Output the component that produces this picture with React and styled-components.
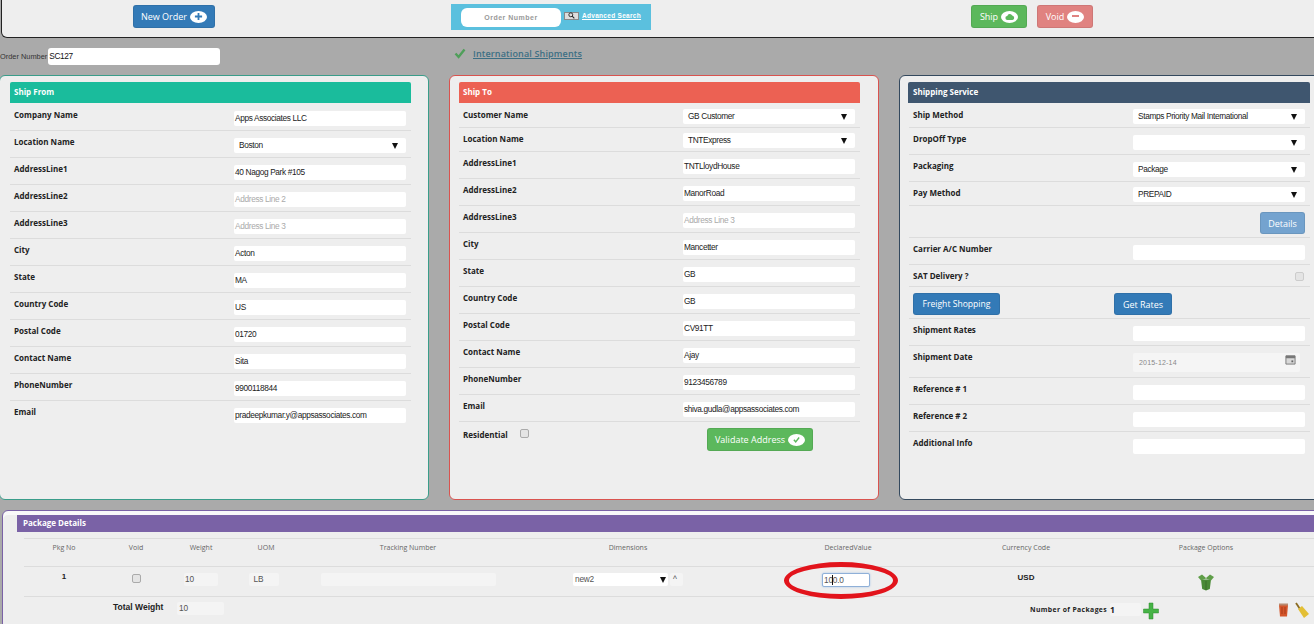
import React from 'react'
import styled, { createGlobalStyle } from 'styled-components'

const Global = createGlobalStyle`
html, body { margin:0; padding:0; background:#aaaaaa; overflow:hidden; }
body { font-family:"Liberation Sans", Arial, sans-serif; width:1314px; height:624px; }
* { box-sizing:border-box; }
`

const Page = styled.div`
position:relative;
width:1314px;
height:624px;
overflow:hidden;
`

const TopBar = styled.div`
height:38px;
margin-left:1px;
width:1320px;
background:#eeeeee;
border:1px solid #222;
border-top:none;
border-radius:0 0 6px 6px;
display:grid;
grid-template-columns:449px 200px 1fr;
padding-top:5px;
`

const TopCell = styled.div`
display:flex;
align-items:flex-start;
padding-left:${p => p.$pad || 0}px;
gap:${p => p.$gap || 0}px;
`

const Btn = styled.div`
display:inline-flex;
align-items:center;
justify-content:center;
gap:3px;
flex:none;
width:${p => p.$w}px;
height:${p => p.$h || 23}px;
margin:${p => p.$m || 0};
background:${p => p.$bg || '#337ab7'};
color:#fff;
font-family:"Open Sans", sans-serif;
font-size:${p => p.$fs || 9}px;
border-radius:3px;
border:1px solid rgba(0,0,0,.08);
white-space:nowrap;
`

const Badge = styled.span`
width:17px;
height:12px;
border-radius:50%;
background:#fff;
display:flex;
align-items:center;
justify-content:center;
`

const SearchBox = styled.div`
width:200px;
height:26px;
margin-top:-1px;
background:#5bc0de;
display:flex;
align-items:center;
padding-left:10px;
`

const SearchInput = styled.div`
width:100px;
height:19px;
background:#fff;
border-radius:6px;
color:#999;
font-size:7px;
font-weight:bold;
letter-spacing:.5px;
display:flex;
align-items:center;
justify-content:center;
`

const SearchBtn = styled.div`
width:15px;
height:8px;
margin:-3px 0 0 3px;
background:#ddd;
border:1px solid #888;
display:flex;
align-items:center;
justify-content:center;
`

const SearchLink = styled.span`
margin:-3px 0 0 3px;
color:#fff;
font-size:6.5px;
font-weight:bold;
letter-spacing:.3px;
text-decoration:underline;
white-space:nowrap;
`

const OrderRow = styled.div`
height:37px;
display:grid;
grid-template-columns:449px 1fr;
padding-top:10px;
`

const OrderField = styled.div`
display:flex;
align-items:flex-start;
gap:1px;
font-size:7.4px;
color:#333;
line-height:17px;
white-space:nowrap;
`

const OrderInput = styled.div`
width:172px;
height:17px;
background:#fff;
border-radius:3px;
font-size:8.300px;
letter-spacing:-.35px;
color:#111;
padding-left:1px;
`

const Intl = styled.div`
display:flex;
align-items:center;
gap:7px;
padding-left:5px;
height:12px;
margin-top:-1px;
`

const IntlLink = styled.span`
color:#3c6f84;
font-family:"Open Sans", sans-serif;
font-size:9px;
font-weight:600;
letter-spacing:.15px;
text-decoration:underline;
`

const Panels = styled.div`
display:grid;
grid-template-columns:430px 430px 430px;
gap:20px;
margin-left:-1px;
height:425px;
`

const Panel = styled.div`
background:#eeeeee;
border:1px solid ${p => p.$c};
border-radius:6px;
padding:6px ${p => p.$pr || 17}px 0 ${p => p.$pl || 10}px;
`

const Head = styled.div`
height:21px;
margin:0 0 1px ${p => p.$ml || 0}px;
background:${p => p.$bg};
color:#fff;
font-family:"Open Sans", sans-serif;
font-size:8px;
font-weight:700;
line-height:20px;
padding-left:${p => p.$ml ? 5 : 4}px;
border-radius:2px 2px 0 0;
`

const Row = styled.div`
display:grid;
grid-template-columns:220px 1fr;
height:${p => p.$h || 27}px;
border-bottom:1px solid ${p => p.$last ? 'transparent' : '#dcdcdc'};
padding:${p => p.$top ?? 6}px 0 0 4px;
`

const Label = styled.div`
font-family:"Open Sans", sans-serif;
font-size:8px;
font-weight:700;
color:#222;
line-height:10px;
display:flex;
align-items:flex-start;
gap:${p => p.$gap || 0}px;
`

const Field = styled.div`
height:15px;
width:172px;
margin-top:${p => p.$tight ? -1 : 1}px;
background:#fff;
border-radius:2px;
padding:0 1px 0 ${p => p.$sel ? 5 : 1}px;
font-size:8.300px;
letter-spacing:-.35px;
line-height:15px;
color:${p => p.$ph ? '#aaa' : '#222'};
display:flex;
justify-content:space-between;
align-items:center;
white-space:nowrap;
overflow:hidden;
`

const DateField = styled(Field)`
width:167px;
height:19px;
background:#f5f5f5;
padding:0 4px 0 6px;
color:#888;
font-size:7px;
letter-spacing:.2px;
`

const DateIcon = styled.span`
display:flex;
margin-top:-7px;
`

const Arrow = styled.span`
width:0;
height:0;
border-left:3px solid transparent;
border-right:3px solid transparent;
border-top:6px solid #111;
margin-right:${p => p.$mr ?? 7}px;
`

const Check = styled.span`
width:9px;
height:9px;
flex:none;
background:#e4e4e4;
border:1px solid ${p => p.$soft ? '#ccc' : '#aaa'};
border-radius:2px;
display:block;
margin:${p => p.$m || 0};
`

const RowEnd = styled.div`
display:flex;
justify-content:flex-end;
width:172px;
`

const ActionCell = styled.div`
display:flex;
align-items:flex-start;
`

const PkgWrap = styled.div`
margin:10px 0 0 2px;
width:1330px;
height:120px;
background:#eeeeee;
border:1px solid #7a62a6;
border-radius:6px 0 0 0;
box-shadow:inset 0 4px 0 #f9f9f9;
padding:4px 0 0 14px;
`

const PkgHead = styled.div`
height:17px;
background:#7a62a6;
color:#fff;
font-family:"Open Sans", sans-serif;
font-size:8px;
font-weight:700;
line-height:16px;
padding-left:6px;
`

const PkgGrid = styled.div`
margin:6px 0 0 7px;
display:grid;
grid-template-columns:80px 64px 66px 64px 220px 220px 220px 136px 224px;
width:1294px;
`

const PkgHeadRow = styled(PkgGrid)`
height:29px;
border-top:1px solid #dcdcdc;
border-bottom:1px solid #dcdcdc;
`

const ColTitle = styled.div`
font-family:"Open Sans", sans-serif;
font-size:7px;
color:#666;
text-align:center;
line-height:18px;
`

const PkgRow = styled(PkgGrid)`
margin-top:0;
height:30px;
border-bottom:1px solid #dcdcdc;
`

const Cell = styled.div`
display:flex;
justify-content:center;
align-items:flex-start;
padding-top:${p => p.$t ?? 5}px;
gap:${p => p.$gap || 0}px;
font-size:8px;
font-weight:${p => p.$b ? 700 : 400};
color:#222;
`

const Small = styled.div`
width:${p => p.$w}px;
height:13px;
margin-right:${p => p.$mr || 0}px;
background:${p => p.$bg || '#f4f4f4'};
border-radius:2px;
font-size:8.300px;
line-height:13px;
letter-spacing:-.2px;
padding-left:${p => p.$pl ?? 1}px;
color:#555;
display:flex;
justify-content:space-between;
align-items:center;
`

const Focused = styled.div`
position:relative;
width:48px;
height:14px;
margin:0 4px 0 0;
background:#fff;
border:1px solid #8fb0d8;
border-radius:2px;
box-shadow:0 0 2px #9fc0e8;
font-size:8.300px;
letter-spacing:-.2px;
line-height:12px;
padding-left:1px;
color:#555;
`

const Caret = styled.span`
position:absolute;
left:9px;
top:1px;
width:1px;
height:10px;
background:#111;
`

const Ring = styled.div`
position:absolute;
left:784px;
top:562px;
width:114px;
height:37px;
border:5px solid #e2141c;
border-radius:50%;
pointer-events:none;
`

const Totals = styled.div`
display:grid;
grid-template-columns:89px 64px 853px 113px 135px 17px 20px;
margin-left:7px;
align-items:start;
padding-top:5px;
`

const TotalLabel = styled.div`
grid-column:2;
font-size:8.500px;
font-weight:700;
color:#222;
line-height:11px;
white-space:nowrap;
`

const PkgCount = styled.div`
display:flex;
align-items:flex-start;
gap:3px;
margin-top:1px;
font-family:"Open Sans", sans-serif;
font-size:6.800px;
font-weight:700;
letter-spacing:.4px;
color:#222;
white-space:nowrap;
line-height:13px;
`

const CountValue = styled(Small)`
font-family:"Open Sans", sans-serif;
font-size:8.500px;
font-weight:700;
color:#222;
`

const Plus = () => (
  <svg width="9" height="9" viewBox="0 0 10 10"><path d="M4 1h2v3h3v2H6v3H4V6H1V4h3z" fill="#337ab7"/></svg>
)

const Cloud = () => (
  <svg width="10" height="8" viewBox="0 0 10 8"><path d="M2.500 7a2 2 0 0 1-.2-4A2.600 2.600 0 0 1 7.200 2.500 2.300 2.300 0 0 1 7.500 7z" fill="#5cb85c"/></svg>
)

const Minus = () => (
  <svg width="7" height="3"><rect width="7" height="2" fill="#e08280"/></svg>
)

const Tick = ({ size = 9, color = '#5cb85c' }) => (
  <svg width={size} height={size} viewBox="0 0 12 12"><path d="M1.500 6.500 4.600 10 10.500 2.500" fill="none" stroke={color} strokeWidth="2.400"/></svg>
)

const Glass = () => (
  <svg width="7" height="7" viewBox="0 0 10 10"><circle cx="4" cy="4" r="2.800" fill="none" stroke="#222" strokeWidth="1.300"/><path d="M6 6l3 3" stroke="#222" strokeWidth="1.500"/></svg>
)

const Calendar = () => (
  <svg width="11" height="11" viewBox="0 0 12 12"><path d="M1 2h10v9H1z" fill="#d8d8d8" stroke="#777"/><path d="M1 2h10v2.500H1z" fill="#777"/><rect x="7" y="7" width="2" height="2" fill="#666"/></svg>
)

const Box = () => (
  <svg width="18" height="18" viewBox="0 0 18 18">
    <path d="M4 6.500h10l-1.200 9.500-3.800 1.500L5.200 16z" fill="#4a8a36"/>
    <path d="M1 4l4-2.500L9 5l4-3.500L17 4l-3 3.500L9 5.500 4 7.500z" fill="#5f9e48"/>
    <path d="M9 8v9" stroke="#3a6f2a"/>
  </svg>
)

const GreenPlus = () => (
  <svg width="16" height="18" viewBox="0 0 16 18"><path d="M6 1h4v6h5.500v4H10v6H6v-6H.5V7H6z" fill="#46b346" stroke="#2c8a2c" strokeWidth=".5"/></svg>
)

const Trash = () => (
  <svg width="11" height="15" viewBox="0 0 11 15"><path d="M1 3h9l-1 11.500H2z" fill="#d4552a"/><path d="M1 2.500h9" stroke="#b98a70" strokeWidth="2"/><path d="M4 5v7M7 5v7" stroke="#a83a18"/></svg>
)

const Broom = () => (
  <svg width="14" height="16" viewBox="0 0 14 16"><path d="M1 1l4 6" stroke="#8a6a20" strokeWidth="1.800"/><path d="M3 7l4-3 7 8-5 4z" fill="#e3bf35"/></svg>
)

const shipFrom = [
  ['Company Name', 'Apps Associates LLC'],
  ['Location Name', 'Boston', 'select'],
  ['AddressLine1', '40 Nagog Park #105'],
  ['AddressLine2', 'Address Line 2', 'ph'],
  ['AddressLine3', 'Address Line 3', 'ph'],
  ['City', 'Acton'],
  ['State', 'MA'],
  ['Country Code', 'US'],
  ['Postal Code', '01720'],
  ['Contact Name', 'Sita'],
  ['PhoneNumber', '9900118844'],
  ['Email', 'pradeepkumar.y@appsassociates.com', null, 27, true],
]

const shipTo = [
  ['Customer Name', 'GB Customer', 'select', 24],
  ['Location Name', 'TNTExpress', 'select', 24],
  ['AddressLine1', 'TNTLloydHouse'],
  ['AddressLine2', 'ManorRoad'],
  ['AddressLine3', 'Address Line 3', 'ph'],
  ['City', 'Mancetter'],
  ['State', 'GB'],
  ['Country Code', 'GB'],
  ['Postal Code', 'CV91TT'],
  ['Contact Name', 'Ajay'],
  ['PhoneNumber', '9123456789'],
  ['Email', 'shiva.gudla@appsassociates.com'],
]

const FormRow = ({ label, value, kind, h, last }) => (
  <Row $h={h} $last={last}>
    <Label>{label}</Label>
    <Field $ph={kind === 'ph'} $sel={kind === 'select'} $tight={h === 24}>
      {value}
      {kind === 'select' && <><span />{!value && <span />}<Arrow /></>}
    </Field>
  </Row>
)

export default function App() {
  return (
    <Page>
      <Global />
      <TopBar>
        <TopCell $pad={131}>
          <Btn $w={82}>New Order <Badge><Plus /></Badge></Btn>
        </TopCell>
        <TopCell>
          <SearchBox>
            <SearchInput>Order Number</SearchInput>
            <SearchBtn><Glass /></SearchBtn>
            <SearchLink>Advanced Search</SearchLink>
          </SearchBox>
        </TopCell>
        <TopCell $pad={320} $gap={10}>
          <Btn $w={56} $bg="#5cb85c">Ship <Badge><Cloud /></Badge></Btn>
          <Btn $w={56} $bg="#e08280">Void <Badge><Minus /></Badge></Btn>
        </TopCell>
      </TopBar>
      <OrderRow>
        <OrderField>Order Number<OrderInput>SC127</OrderInput></OrderField>
        <Intl><Tick size={12} color="#4f9f5a" /><IntlLink>International Shipments</IntlLink></Intl>
      </OrderRow>
      <Panels>
        <Panel $c="#3a9d8a">
          <Head $bg="#1abc9c">Ship From</Head>
          {shipFrom.map(r => <FormRow key={r[0]} label={r[0]} value={r[1]} kind={r[2]} h={r[3]} last={r[4]} />)}
        </Panel>
        <Panel $c="#d9534f" $pl={9} $pr={18}>
          <Head $bg="#ec6153">Ship To</Head>
          {shipTo.map(r => <FormRow key={r[0]} label={r[0]} value={r[1]} kind={r[2]} h={r[3]} />)}
          <Row $h={40} $top={8} $last>
            <Label $gap={12}>Residential <Check $m="-1px 0 0 0" /></Label>
            <ActionCell>
              <Btn $w={106} $m="-2px 0 0 24px" $bg="#5cb85c">Validate Address <Badge><Tick size={7} /></Badge></Btn>
            </ActionCell>
          </Row>
        </Panel>
        <Panel $c="#34495e" $pl={9} $pr={18}>
          <Head $bg="#3f566f" $ml={-1}>Shipping Service</Head>
          <FormRow label="Ship Method" value="Stamps Priority Mail International" kind="select" h={24} />
          <FormRow label="DropOff Type" value="" kind="select" />
          <FormRow label="Packaging" value="Package" kind="select" />
          <FormRow label="Pay Method" value="PREPAID" kind="select" h={24} />
          <Row $h={32}>
            <div />
            <RowEnd><Btn $w={45} $h={22} $bg="#74a3cf">Details</Btn></RowEnd>
          </Row>
          <FormRow label="Carrier A/C Number" value="" />
          <Row $h={22}>
            <Label>SAT Delivery ?</Label>
            <RowEnd><Check $soft $m="1px 1px 0 0" /></RowEnd>
          </Row>
          <Row $h={32}>
            <ActionCell><Btn $w={87} $h={22} $fs={8.6}>Freight Shopping</Btn></ActionCell>
            <ActionCell><Btn $w={58} $h={22} $m="0 0 0 -19px">Get Rates</Btn></ActionCell>
          </Row>
          <FormRow label="Shipment Rates" value="" />
          <Row $h={32}>
            <Label>Shipment Date</Label>
            <DateField>2015-12-14<DateIcon><Calendar /></DateIcon></DateField>
          </Row>
          <FormRow label="Reference # 1" value="" />
          <FormRow label="Reference # 2" value="" />
          <FormRow label="Additional Info" value="" last />
        </Panel>
      </Panels>
      <PkgWrap>
        <PkgHead>Package Details</PkgHead>
        <PkgHeadRow>
          <ColTitle>Pkg No</ColTitle>
          <ColTitle>Void</ColTitle>
          <ColTitle>Weight</ColTitle>
          <ColTitle>UOM</ColTitle>
          <ColTitle>Tracking Number</ColTitle>
          <ColTitle>Dimensions</ColTitle>
          <ColTitle>DeclaredValue</ColTitle>
          <ColTitle>Currency Code</ColTitle>
          <ColTitle>Package Options</ColTitle>
        </PkgHeadRow>
        <PkgRow>
          <Cell $b $t={5}>1</Cell>
          <Cell $t={7}><Check /></Cell>
          <Cell $t={6}><Small $w={34}>10</Small></Cell>
          <Cell $t={6}><Small $w={30} $pl={5} $mr={5}>LB</Small></Cell>
          <Cell $t={6}><Small $w={175} /></Cell>
          <Cell $gap={2} $t={6}>
            <Small $w={95} $bg="#fff" $pl={2}>new2<Arrow $mr={2} /></Small>
            <Small $w={13} $pl={3}>^</Small>
          </Cell>
          <Cell $t={6}><Focused><Caret />100.0</Focused></Cell>
          <Cell $b $t={6}>USD</Cell>
          <Cell $t={6}><Box /></Cell>
        </PkgRow>
        <Totals>
          <TotalLabel>Total Weight</TotalLabel>
          <Small $w={47} $pl={2}>10</Small>
          <PkgCount>Number of Packages<CountValue $w={31} $pl={0}>1</CountValue></PkgCount>
          <GreenPlus />
          <Trash />
          <Broom />
        </Totals>
      </PkgWrap>
      <Ring />
    </Page>
  )
}
